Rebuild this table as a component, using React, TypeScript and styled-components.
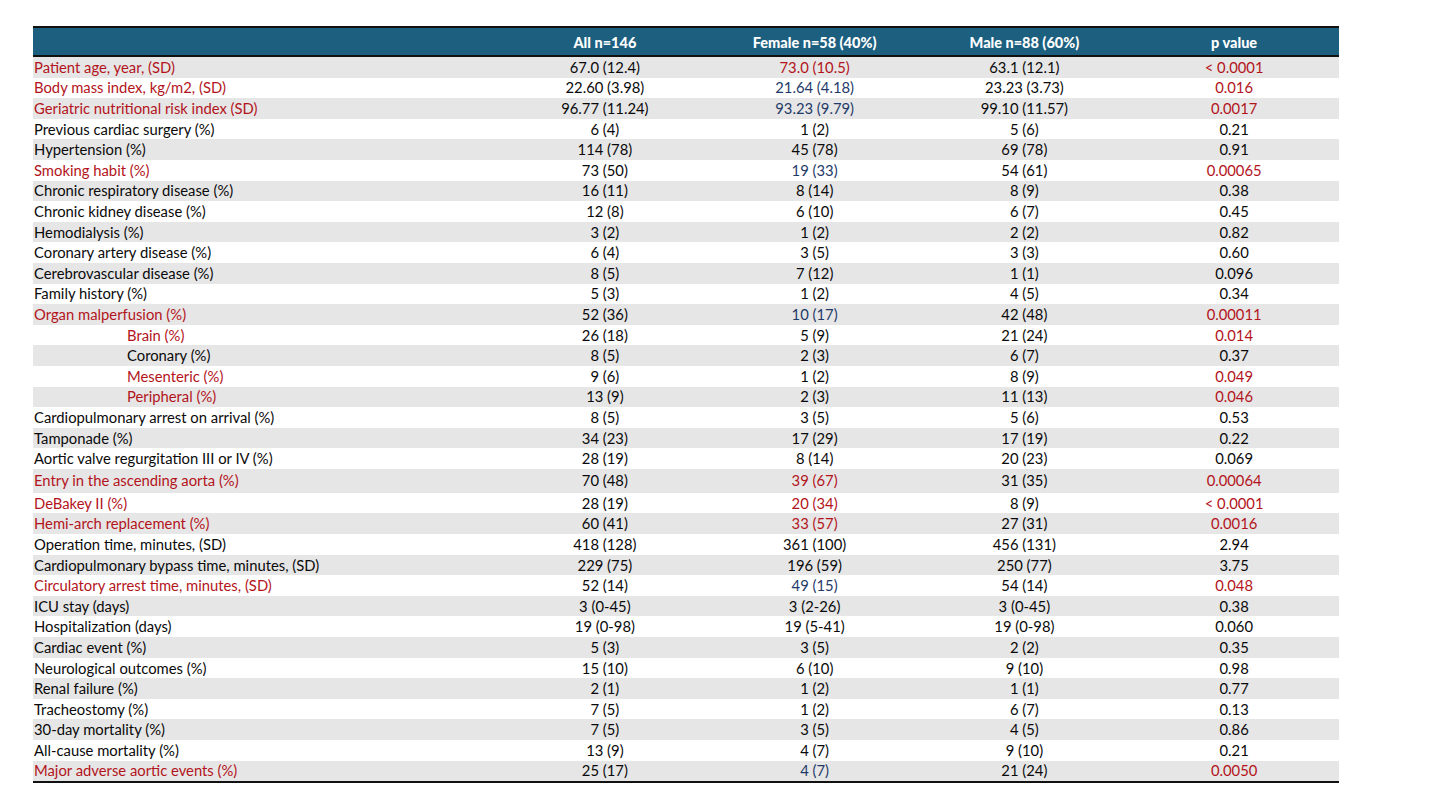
import React from "react";
import styled, { createGlobalStyle } from "styled-components";

type Tone = "plain" | "red" | "blue";

interface Row {
  label: string;
  all: string;
  female: string;
  male: string;
  p: string;
  labelTone?: Tone;
  femaleTone?: Tone;
  pTone?: Tone;
  indent?: boolean;
  tall?: boolean;
}

const rows: Row[] = [
  { label: "Patient age, year, (SD)", all: "67.0 (12.4)", female: "73.0 (10.5)", male: "63.1 (12.1)", p: "< 0.0001", labelTone: "red", femaleTone: "red", pTone: "red" },
  { label: "Body mass index, kg/m2, (SD)", all: "22.60 (3.98)", female: "21.64 (4.18)", male: "23.23 (3.73)", p: "0.016", labelTone: "red", femaleTone: "blue", pTone: "red" },
  { label: "Geriatric nutritional risk index (SD)", all: "96.77 (11.24)", female: "93.23 (9.79)", male: "99.10 (11.57)", p: "0.0017", labelTone: "red", femaleTone: "blue", pTone: "red" },
  { label: "Previous cardiac surgery (%)", all: "6 (4)", female: "1 (2)", male: "5 (6)", p: "0.21" },
  { label: "Hypertension (%)", all: "114 (78)", female: "45 (78)", male: "69 (78)", p: "0.91" },
  { label: "Smoking habit (%)", all: "73 (50)", female: "19 (33)", male: "54 (61)", p: "0.00065", labelTone: "red", femaleTone: "blue", pTone: "red" },
  { label: "Chronic respiratory disease (%)", all: "16 (11)", female: "8 (14)", male: "8 (9)", p: "0.38" },
  { label: "Chronic kidney disease (%)", all: "12 (8)", female: "6 (10)", male: "6 (7)", p: "0.45" },
  { label: "Hemodialysis (%)", all: "3 (2)", female: "1 (2)", male: "2 (2)", p: "0.82" },
  { label: "Coronary artery disease (%)", all: "6 (4)", female: "3 (5)", male: "3 (3)", p: "0.60" },
  { label: "Cerebrovascular disease (%)", all: "8 (5)", female: "7 (12)", male: "1 (1)", p: "0.096" },
  { label: "Family history (%)", all: "5 (3)", female: "1 (2)", male: "4 (5)", p: "0.34" },
  { label: "Organ malperfusion (%)", all: "52 (36)", female: "10 (17)", male: "42 (48)", p: "0.00011", labelTone: "red", femaleTone: "blue", pTone: "red" },
  { label: "Brain (%)", all: "26 (18)", female: "5 (9)", male: "21 (24)", p: "0.014", labelTone: "red", pTone: "red", indent: true },
  { label: "Coronary (%)", all: "8 (5)", female: "2 (3)", male: "6 (7)", p: "0.37", indent: true },
  { label: "Mesenteric (%)", all: "9 (6)", female: "1 (2)", male: "8 (9)", p: "0.049", labelTone: "red", pTone: "red", indent: true },
  { label: "Peripheral (%)", all: "13 (9)", female: "2 (3)", male: "11 (13)", p: "0.046", labelTone: "red", pTone: "red", indent: true },
  { label: "Cardiopulmonary arrest on arrival (%)", all: "8 (5)", female: "3 (5)", male: "5 (6)", p: "0.53" },
  { label: "Tamponade (%)", all: "34 (23)", female: "17 (29)", male: "17 (19)", p: "0.22" },
  { label: "Aortic valve regurgitation III or IV (%)", all: "28 (19)", female: "8 (14)", male: "20 (23)", p: "0.069" },
  { label: "Entry in the ascending aorta (%)", all: "70 (48)", female: "39 (67)", male: "31 (35)", p: "0.00064", labelTone: "red", femaleTone: "red", pTone: "red", tall: true },
  { label: "DeBakey II (%)", all: "28 (19)", female: "20 (34)", male: "8 (9)", p: "< 0.0001", labelTone: "red", femaleTone: "red", pTone: "red" },
  { label: "Hemi-arch replacement (%)", all: "60 (41)", female: "33 (57)", male: "27 (31)", p: "0.0016", labelTone: "red", femaleTone: "red", pTone: "red" },
  { label: "Operation time, minutes, (SD)", all: "418 (128)", female: "361 (100)", male: "456 (131)", p: "2.94" },
  { label: "Cardiopulmonary bypass time, minutes, (SD)", all: "229 (75)", female: "196 (59)", male: "250 (77)", p: "3.75" },
  { label: "Circulatory arrest time, minutes, (SD)", all: "52 (14)", female: "49 (15)", male: "54 (14)", p: "0.048", labelTone: "red", femaleTone: "blue", pTone: "red" },
  { label: "ICU stay (days)", all: "3 (0-45)", female: "3 (2-26)", male: "3 (0-45)", p: "0.38" },
  { label: "Hospitalization (days)", all: "19 (0-98)", female: "19 (5-41)", male: "19 (0-98)", p: "0.060" },
  { label: "Cardiac event (%)", all: "5 (3)", female: "3 (5)", male: "2 (2)", p: "0.35" },
  { label: "Neurological outcomes (%)", all: "15 (10)", female: "6 (10)", male: "9 (10)", p: "0.98" },
  { label: "Renal failure (%)", all: "2 (1)", female: "1 (2)", male: "1 (1)", p: "0.77" },
  { label: "Tracheostomy (%)", all: "7 (5)", female: "1 (2)", male: "6 (7)", p: "0.13" },
  { label: "30-day mortality (%)", all: "7 (5)", female: "3 (5)", male: "4 (5)", p: "0.86" },
  { label: "All-cause mortality (%)", all: "13 (9)", female: "4 (7)", male: "9 (10)", p: "0.21" },
  { label: "Major adverse aortic events (%)", all: "25 (17)", female: "4 (7)", male: "21 (24)", p: "0.0050", labelTone: "red", femaleTone: "blue", pTone: "red" },
];

const toneColor: Record<Tone, string> = {
  plain: "#0a0a0a",
  red: "#b3141b",
  blue: "#1f3a68",
};

const GlobalStyle = createGlobalStyle`
  html, body {
    margin: 0;
    padding: 0;
    background: #ffffff;
  }
  body {
    font-family: Lato, "Open Sans", "Liberation Sans", sans-serif;
    -webkit-font-smoothing: antialiased;
  }
`;

const Page = styled.div`
  width: 1440px;
  height: 810px;
  padding: 26px 0 0 33px;
  box-sizing: border-box;
  background: #ffffff;
`;

const Table = styled.div`
  width: 1306px;
  border-top: 2px solid #111111;
  border-bottom: 2px solid #111111;
`;

const Columns = styled.div`
  display: grid;
  grid-template-columns: 467px repeat(4, 1fr);
  align-items: center;
`;

const HeadRow = styled(Columns)`
  height: 27px;
  background: #1d5f7f;
  border-bottom: 2px solid #111111;
`;

const HeadCell = styled.div`
  color: #ffffff;
  font-weight: 900;
  font-size: 14.5px;
  text-align: center;
  padding-top: 1px;
`;

const BodyRow = styled(Columns)<{ $striped: boolean; $tall?: boolean }>`
  height: ${(p) => (p.$tall ? "24px" : "20.6px")};
  background: ${(p) => (p.$striped ? "#e6e6e6" : "#ffffff")};
  font-size: 14.8px;
  line-height: 1;
`;

const LabelCell = styled.div<{ $tone: Tone; $indent?: boolean }>`
  color: ${(p) => toneColor[p.$tone]};
  padding-left: ${(p) => (p.$indent ? "94px" : "1px")};
  white-space: nowrap;
`;

const ValueCell = styled.div<{ $tone: Tone }>`
  color: ${(p) => toneColor[p.$tone]};
  text-align: center;
  white-space: nowrap;
`;

export default function App() {
  return (
    <>
      <GlobalStyle />
      <Page>
        <Table>
          <HeadRow>
            <HeadCell />
            <HeadCell>All n=146</HeadCell>
            <HeadCell>Female n=58 (40%)</HeadCell>
            <HeadCell>Male n=88 (60%)</HeadCell>
            <HeadCell>p value</HeadCell>
          </HeadRow>
          {rows.map((r, i) => (
            <BodyRow key={r.label + i} $striped={i % 2 === 0} $tall={r.tall}>
              <LabelCell $tone={r.labelTone ?? "plain"} $indent={r.indent}>
                {r.label}
              </LabelCell>
              <ValueCell $tone="plain">{r.all}</ValueCell>
              <ValueCell $tone={r.femaleTone ?? "plain"}>{r.female}</ValueCell>
              <ValueCell $tone="plain">{r.male}</ValueCell>
              <ValueCell $tone={r.pTone ?? "plain"}>{r.p}</ValueCell>
            </BodyRow>
          ))}
        </Table>
      </Page>
    </>
  );
}
